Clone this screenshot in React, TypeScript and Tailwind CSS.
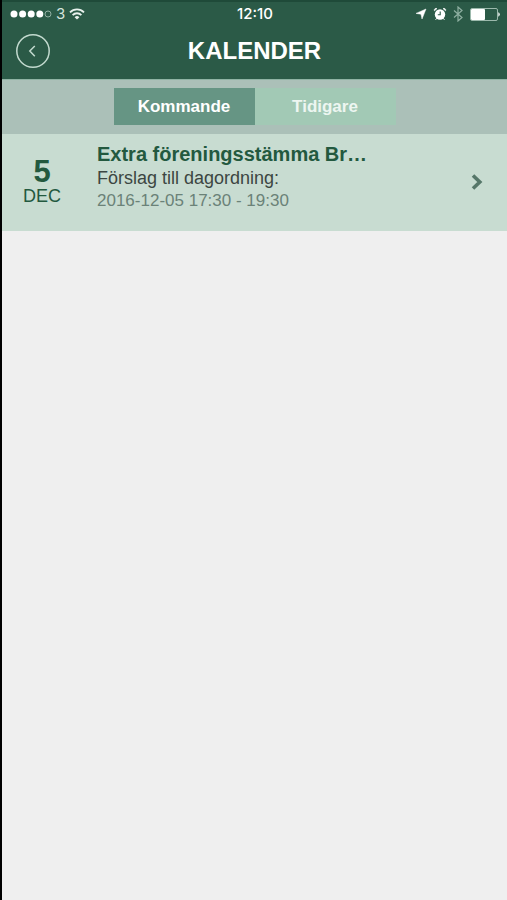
import { useState } from "react"

const events = [
  {
    day: "5",
    month: "DEC",
    title: "Extra föreningsstämma Br…",
    description: "Förslag till dagordning:",
    time: "2016-12-05 17:30 - 19:30",
  },
]

function SignalDots() {
  return (
    <svg width="42" height="8" viewBox="0 0 42 8" fill="white">
      <circle cx="4" cy="4" r="3.5" />
      <circle cx="12.6" cy="4" r="3.5" />
      <circle cx="21.2" cy="4" r="3.5" />
      <circle cx="29.8" cy="4" r="3.5" />
      <circle cx="38" cy="4" r="3" fill="none" stroke="#a9c4b8" strokeWidth="0.8" />
    </svg>
  )
}

function WifiIcon() {
  return (
    <svg width="16" height="12" viewBox="0 0 16 12" fill="none" stroke="#e8f1ed" strokeWidth="1.8">
      <path d="M1 4.3a10 10 0 0 1 14 0" />
      <path d="M3.6 7.1a6.2 6.2 0 0 1 8.8 0" />
      <path d="M8 11.6 5.6 9.2a3.4 3.4 0 0 1 4.8 0z" fill="#e8f1ed" stroke="none" />
    </svg>
  )
}

function StatusBar() {
  return (
    <div className="grid h-6 grid-cols-3 items-center pr-[7px] pl-2 text-white">
      <div className="flex items-center">
        <SignalDots />
        <span className="mx-1 font-['Inter',sans-serif] text-[15px] text-[#d5e4dd]">3</span>
        <WifiIcon />
      </div>
      <div className="text-center font-['Inter',sans-serif] text-[15px] font-medium">12:10</div>
      <div className="flex items-center justify-end">
        <svg width="12" height="12" viewBox="0 0 12 12" fill="white" className="mr-1.5">
          <path d="M11 1 7 11 6 6.2 1 5.4z" stroke="white" strokeWidth="0.5" />
        </svg>
        <svg width="14" height="14" viewBox="0 0 14 14" className="mr-1.5">
          <circle cx="7" cy="7.5" r="5.2" fill="white" />
          <path d="M1.4 3.8a1.8 1.8 0 0 1 2.6-2.2zM12.6 3.8a1.8 1.8 0 0 0-2.6-2.2z" fill="white" stroke="white" strokeWidth="0.6" />
          <path d="M3.6 11.4 2.6 12.8M10.4 11.4l1 1.4" stroke="white" />
          <path d="M7.2 4.6v3.2H4.8" fill="none" stroke="#2b5a47" strokeWidth="1.1" />
        </svg>
        <svg width="10" height="16" viewBox="0 0 10 16" fill="none" stroke="#8fb0a2" strokeWidth="1.2" className="mr-[7px]">
          <path d="M1 4.5 9 11.5 5 15V1L9 4.5 1 11.5" />
        </svg>
        <svg width="30" height="13" viewBox="0 0 30 13">
          <rect x="0.5" y="0.5" width="27" height="12" rx="1.5" fill="none" stroke="#a9c4b8" strokeWidth="0.9" />
          <rect x="1" y="1" width="14" height="11" rx="1" fill="white" />
          <path d="M28.3 4.3a2.4 2.4 0 0 1 0 4.4z" fill="white" />
        </svg>
      </div>
    </div>
  )
}

function Header() {
  return (
    <header className="border-t-2 border-[#1f4a39] bg-[#2b5a47]">
      <StatusBar />
      <div className="grid h-[53px] grid-cols-[64px_1fr_64px] items-start pt-2">
        <button type="button" aria-label="Tillbaka" className="ml-3.5">
          <svg width="34" height="34" viewBox="0 0 34 34" fill="none" stroke="#c3dacf">
            <circle cx="17" cy="17" r="16.2" strokeWidth="1.5" />
            <path d="M18.8 12 13.8 17l5 5.2" strokeWidth="1.5" />
          </svg>
        </button>
        <h1 className="text-center text-2xl leading-[34px] font-bold text-white">KALENDER</h1>
      </div>
    </header>
  )
}

function App() {
  const [tab, setTab] = useState("kommande")

  return (
    <div className="min-h-screen border-l-2 border-black bg-[#efefef] font-['Liberation_Sans',Arial,sans-serif]">
      <Header />
      <div className="flex h-[55px] justify-center border-t border-[#8fb3a4] bg-[#abc0b8] pt-2">
        <button
          type="button"
          onClick={() => setTab("kommande")}
          className={`h-[37px] w-[141px] text-[17px] font-bold ${tab === "kommande" ? "bg-[#669584] text-white" : "bg-[#a2c9b5] text-[#edf6f1]"}`}
        >
          Kommande
        </button>
        <button
          type="button"
          onClick={() => setTab("tidigare")}
          className={`h-[37px] w-[141px] text-[17px] font-bold ${tab === "tidigare" ? "bg-[#669584] text-white" : "bg-[#a2c9b5] text-[#edf6f1]"}`}
        >
          Tidigare
        </button>
      </div>
      <main>
        {events.map((event) => (
          <a key={event.time} href="#" className="flex h-[97px] items-start bg-[#c8dcd1] pr-6">
            <div className="w-20 shrink-0 pt-[22px] text-center text-[#23593f]">
              <div className="text-[31px] leading-8 font-bold">{event.day}</div>
              <div className="text-lg leading-4">{event.month}</div>
            </div>
            <div className="min-w-0 flex-1 pt-2 pl-[15px]">
              <h2 className="truncate text-[20px] leading-6 font-bold text-[#23593f]">{event.title}</h2>
              <p className="text-lg leading-6 text-[#3c4642]">{event.description}</p>
              <p className="text-[17px] leading-[21px] text-[#6b8278]">{event.time}</p>
            </div>
            <svg width="12" height="16" viewBox="0 0 12 16" fill="none" stroke="#567769" strokeWidth="3.6" className="mt-10">
              <path d="M2 1.5 8.8 8 2 14.5" />
            </svg>
          </a>
        ))}
      </main>
    </div>
  )
}

export default App
